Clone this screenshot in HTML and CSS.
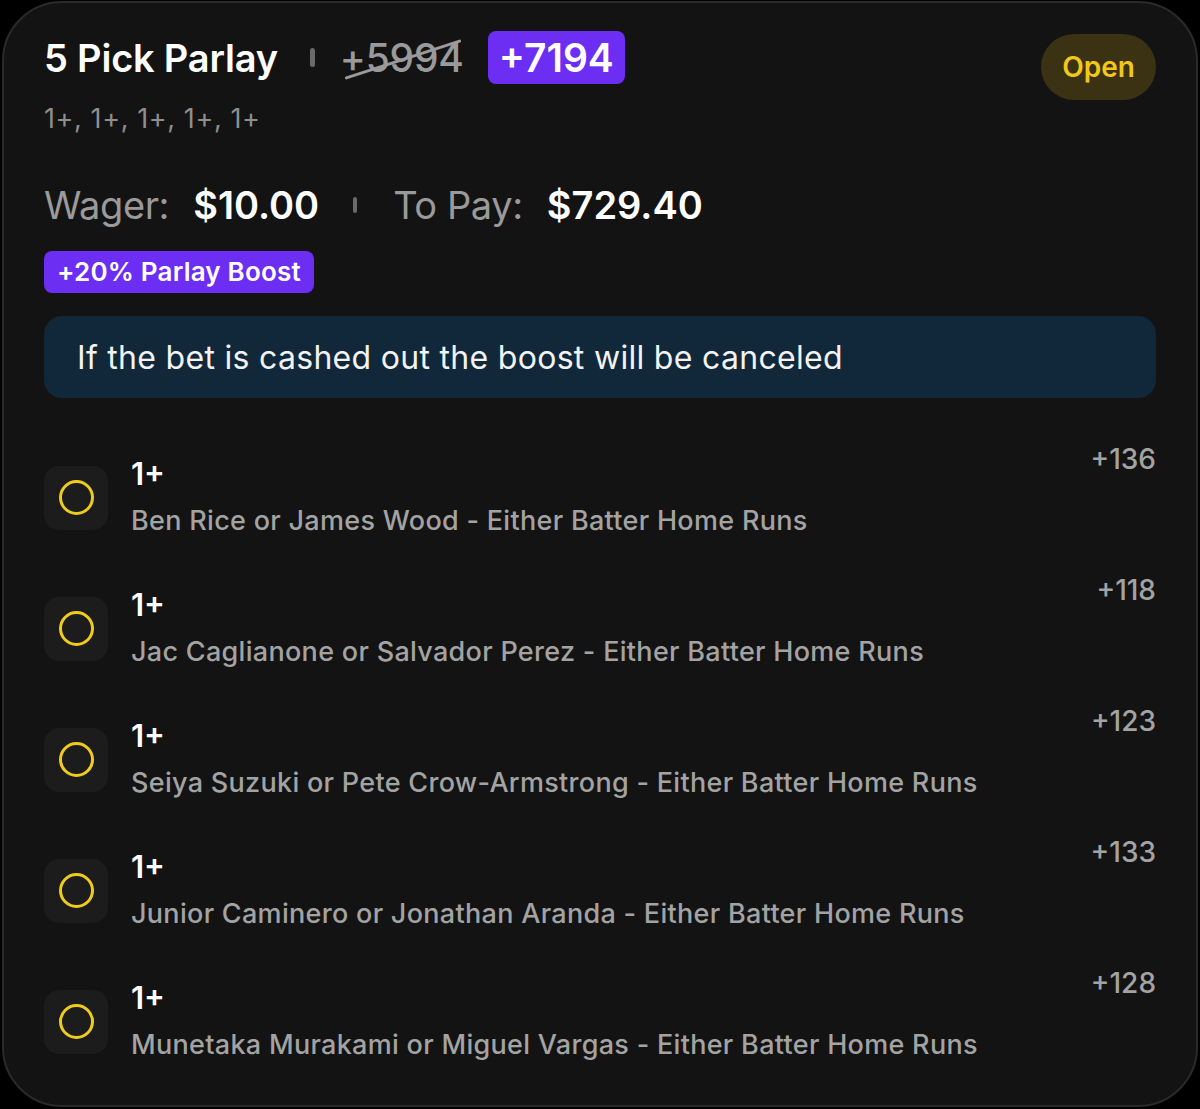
FILE: index.html
```html
<!DOCTYPE html>
<html lang="en">
<head>
    <meta charset="UTF-8">
    <meta name="viewport" content="width=device-width, initial-scale=1.0">
    <title>5 Pick Parlay</title>
    <link rel="stylesheet" href="styles.css">
</head>
<body>
    <div class="card">
        <div class="header">
            <div class="header-main">
                <div class="title-row">
                    <h1>5 Pick Parlay</h1>
                    <span class="divider"></span>
                    <span class="old-odds">+5994</span>
                    <span class="new-odds">+7194</span>
                </div>
                <div class="summary">1+, 1+, 1+, 1+, 1+</div>
            </div>
            <span class="status">Open</span>
        </div>

        <div class="wager-row">
            <span class="label">Wager:</span>
            <span class="amount">$10.00</span>
            <span class="divider small"></span>
            <span class="label">To Pay:</span>
            <span class="amount">$729.40</span>
        </div>

        <span class="boost">+20% Parlay Boost</span>

        <div class="notice">If the bet is cashed out the boost will be canceled</div>

        <ul class="legs">
            <li class="leg">
                <div class="leg-icon"><span class="ring"></span></div>
                <div class="leg-info">
                    <div class="leg-line">1+</div>
                    <div class="leg-desc">Ben Rice or James Wood - Either Batter Home Runs</div>
                </div>
                <div class="leg-odds">+136</div>
            </li>
            <li class="leg">
                <div class="leg-icon"><span class="ring"></span></div>
                <div class="leg-info">
                    <div class="leg-line">1+</div>
                    <div class="leg-desc">Jac Caglianone or Salvador Perez - Either Batter Home Runs</div>
                </div>
                <div class="leg-odds">+118</div>
            </li>
            <li class="leg">
                <div class="leg-icon"><span class="ring"></span></div>
                <div class="leg-info">
                    <div class="leg-line">1+</div>
                    <div class="leg-desc">Seiya Suzuki or Pete Crow-Armstrong - Either Batter Home Runs</div>
                </div>
                <div class="leg-odds">+123</div>
            </li>
            <li class="leg">
                <div class="leg-icon"><span class="ring"></span></div>
                <div class="leg-info">
                    <div class="leg-line">1+</div>
                    <div class="leg-desc">Junior Caminero or Jonathan Aranda - Either Batter Home Runs</div>
                </div>
                <div class="leg-odds">+133</div>
            </li>
            <li class="leg">
                <div class="leg-icon"><span class="ring"></span></div>
                <div class="leg-info">
                    <div class="leg-line">1+</div>
                    <div class="leg-desc">Munetaka Murakami or Miguel Vargas - Either Batter Home Runs</div>
                </div>
                <div class="leg-odds">+128</div>
            </li>
        </ul>
    </div>
</body>
</html>
```

FILE: styles.css
```css
* {
    box-sizing: border-box;
}

body {
    margin: 0;
    background: #000;
    font-family: Inter, "Noto Sans", sans-serif;
    color: #fff;
}

.card {
    margin: 1px 2px;
    height: 1106px;
    background: #131313;
    border: 2px solid #2a2a2a;
    border-radius: 60px;
    padding: 28px 40px 40px 40px;
    display: flex;
    flex-direction: column;
    align-items: flex-start;
}

.header {
    display: flex;
    justify-content: space-between;
    align-items: flex-start;
    width: 100%;
}

.title-row {
    display: flex;
    align-items: center;
    height: 53px;
}

h1 {
    margin: 0;
    font-size: 38px;
    font-weight: 600;
    letter-spacing: -0.2px;
}

.divider {
    width: 5px;
    height: 19px;
    border-radius: 3px;
    background: #6a6a6a;
    margin: 0 25px 0 32px;
}

.divider.small {
    width: 4px;
    height: 16px;
    margin: 0 36px 0 34px;
}

.old-odds {
    position: relative;
    font-size: 39px;
    font-weight: 500;
    color: #9a9a9a;
    letter-spacing: -0.2px;
}

.old-odds::after {
    content: "";
    position: absolute;
    left: 2px;
    right: 0;
    top: 52%;
    height: 3px;
    background: #9a9a9a;
    border-radius: 2px;
    transform: rotate(-18deg);
}

.new-odds {
    margin-left: 24px;
    height: 53px;
    padding: 0 11px;
    display: flex;
    align-items: center;
    background: #6b2ef2;
    border-radius: 8px;
    font-size: 39px;
    font-weight: 600;
}

.summary {
    margin-top: 20px;
    font-size: 27px;
    line-height: 30px;
    letter-spacing: 0.6px;
    color: #8e8e8e;
}

.status {
    margin-top: 3px;
    width: 115px;
    height: 66px;
    border-radius: 33px;
    background: #3a3213;
    color: #f1c71a;
    font-size: 28px;
    font-weight: 600;
    display: flex;
    align-items: center;
    justify-content: center;
}

.wager-row {
    margin-top: 48px;
    display: flex;
    align-items: center;
    height: 48px;
    font-size: 38px;
}

.label {
    color: #9a9a9a;
    margin-right: 24px;
    letter-spacing: -0.4px;
}

.amount {
    font-weight: 600;
}

.boost {
    margin-top: 22px;
    height: 43px;
    padding: 0 13px;
    display: flex;
    align-items: center;
    background: #6b2ef2;
    border-radius: 8px;
    font-size: 26px;
    font-weight: 600;
    letter-spacing: 0.2px;
}

.notice {
    margin-top: 23px;
    width: 100%;
    height: 82px;
    flex-shrink: 0;
    padding: 0 33px;
    display: flex;
    align-items: center;
    background: #11283a;
    border-radius: 18px;
    font-size: 32px;
    letter-spacing: 0.3px;
    color: #f2f2f2;
}

.legs {
    list-style: none;
    margin: 56px 0 0;
    padding: 0;
    width: 100%;
    display: flex;
    flex-direction: column;
    gap: 44px;
}

.leg {
    display: flex;
    align-items: center;
    gap: 23px;
}

.leg-icon {
    width: 64px;
    height: 64px;
    border-radius: 15px;
    background: #1c1c1c;
    display: flex;
    align-items: center;
    justify-content: center;
    flex-shrink: 0;
}

.ring {
    width: 35px;
    height: 35px;
    border: 3px solid #efcb1b;
    border-radius: 50%;
}

.leg-info {
    flex: 1;
    display: flex;
    flex-direction: column;
    gap: 7px;
}

.leg-line {
    font-size: 31px;
    font-weight: 600;
    line-height: 40px;
}

.leg-desc {
    font-size: 27px;
    font-weight: 500;
    line-height: 40px;
    letter-spacing: 0.3px;
    color: #a3a3a3;
}

.leg-odds {
    align-self: flex-start;
    margin-top: -10px;
    font-size: 28px;
    font-weight: 500;
    line-height: 30px;
    color: #a3a3a3;
}
```
